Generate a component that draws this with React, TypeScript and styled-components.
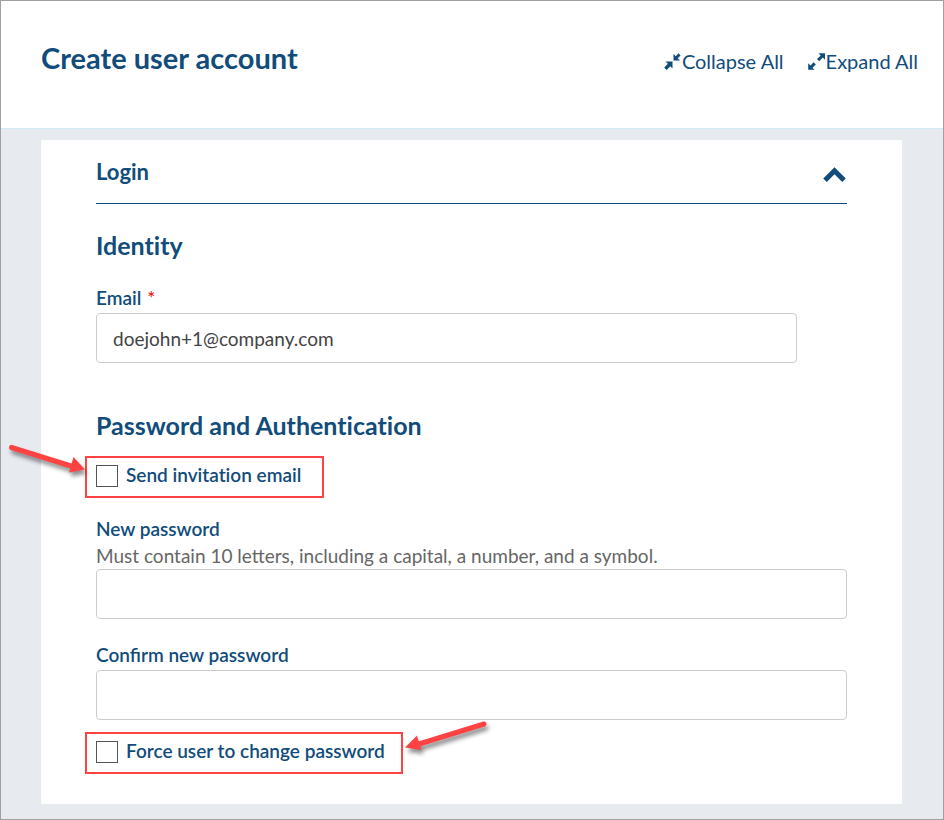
import React, { useId, useState } from "react";
import styled, { createGlobalStyle } from "styled-components";

const navy = "#114c7b";
const red = "#ff4343";

const GlobalStyle = createGlobalStyle`
  *, *::before, *::after { box-sizing: border-box; }
  body { margin: 0; font-family: Lato, "Open Sans", sans-serif; color: ${navy}; }
  button, input { font: inherit; color: inherit; }
`;

const Page = styled.div`
  display: flex;
  flex-direction: column;
  min-height: 100vh;
  border: 1px solid #a0a0a0;
  background: #e7eaef;
`;

const Header = styled.header`
  display: flex;
  align-items: flex-start;
  justify-content: space-between;
  gap: 24px;
  padding: 39px 25px 52px 40px;
  background: #fff;
  border-bottom: 1px solid #d0ebf5;
`;

const Title = styled.h1`
  margin: 0;
  font-size: 29px;
  line-height: 36px;
  font-weight: 700;
`;

const Actions = styled.div`
  display: flex;
  gap: 24px;
  padding-top: 7px;
`;

const ActionButton = styled.button`
  display: flex;
  align-items: center;
  gap: 1px;
  padding: 0;
  border: 0;
  background: none;
  font-size: 20px;
  line-height: 28px;
  white-space: nowrap;
  cursor: pointer;
`;

const Card = styled.main`
  margin: 11px 41px 15px 40px;
  padding: 0 55px 30px;
  background: #fff;
`;

const SectionToggle = styled.button`
  display: flex;
  align-items: center;
  justify-content: space-between;
  width: 100%;
  height: 64px;
  padding: 0;
  border: 0;
  border-bottom: 1px solid ${navy};
  background: none;
  font-size: 22px;
  font-weight: 700;
  text-align: left;
  cursor: pointer;
`;

const ChevronBox = styled.span<{ $open: boolean }>`
  display: flex;
  padding-top: 6px;
  transform: ${(p) => (p.$open ? "none" : "rotate(180deg)")};
`;

const GroupTitle = styled.h2<{ $first?: boolean }>`
  margin: ${(p) => (p.$first ? "25px 0 25px" : "46px 0 15px")};
  font-size: 25px;
  line-height: 32px;
  font-weight: 700;
  font-variant-ligatures: none;
`;

const Field = styled.div<{ $inset?: boolean; $space?: number }>`
  display: flex;
  flex-direction: column;
  margin-top: ${(p) => p.$space ?? 0}px;
  padding-right: ${(p) => (p.$inset ? "50px" : "0")};
`;

const Label = styled.label`
  margin-bottom: 3px;
  font-size: 19px;
  line-height: 24px;
  font-weight: 600;
`;

const CheckLabel = styled(Label)`
  font-variant-ligatures: none;
`;

const Required = styled.span`
  margin-left: 6px;
  color: #f00;
  font-weight: 400;
`;

const Help = styled.span`
  padding-bottom: 1px;
  font-size: 19px;
  line-height: 24px;
  color: #666;
`;

const TextInput = styled.input`
  width: 100%;
  height: 50px;
  padding: 0 16px;
  border: 1px solid #ccc;
  border-radius: 4px;
  background: #fff;
  color: #444;
  font-size: 19px;
`;

const Callout = styled.div<{ $room: number; $space?: number }>`
  position: relative;
  display: flex;
  align-items: flex-start;
  gap: 8px;
  width: fit-content;
  height: 42px;
  margin-top: ${(p) => p.$space ?? 0}px;
  margin-left: -11px;
  padding: 5px ${(p) => p.$room}px 0 9px;
  border: 2px solid ${red};
`;

const CheckBox = styled.input`
  appearance: none;
  width: 22px;
  height: 22px;
  margin: 2px 0 0;
  border: 1px solid #555;
  background: #fff;
  &:checked { background: ${navy}; box-shadow: inset 0 0 0 4px #fff; }
`;

const Arrow = styled.svg<{ $side: "left" | "right" }>`
  position: absolute;
  top: -18px;
  ${(p) => (p.$side === "left" ? "right" : "left")}: calc(100% + 2px);
  overflow: visible;
  filter: drop-shadow(2px 4px 2px rgba(0, 0, 0, 0.45));
  pointer-events: none;
`;

const CollapseIcon = () => (
  <svg width="17" height="17" viewBox="0 0 17 17" fill={navy} aria-hidden="true">
    <path d="M1.5 8.5H8.5V15.5L6.3 13.3L2.6 17L.2 14.6L3.9 10.8Z" />
    <path d="M9.5 .8L11.7 3.2L14.6 .3L16.6 2.4L13.7 5.3L16 7.5H9.5Z" />
  </svg>
);

const ExpandIcon = () => (
  <svg width="17" height="17" viewBox="0 0 17 17" fill={navy} aria-hidden="true">
    <path d="M10.5 .3H17V6.7L14.8 4.6L11.2 8.2L9 6L12.7 2.4Z" />
    <path d="M.2 10.3L2.5 12.6L5.7 9.3L7.8 11.4L4.5 14.7L6.6 16.8H.2Z" />
  </svg>
);

const ChevronIcon = () => (
  <svg width="24" height="16" viewBox="0 0 24 16" fill="none" aria-hidden="true">
    <path d="M2 13.2L11.5 3.8L21 13.2" stroke={navy} strokeWidth="5" />
  </svg>
);

function App() {
  const id = useId();
  const [open, setOpen] = useState(true);
  return (
    <>
      <GlobalStyle />
      <Page>
        <Header>
          <Title>Create user account</Title>
          <Actions>
            <ActionButton type="button" onClick={() => setOpen(false)}>
              <CollapseIcon />
              Collapse All
            </ActionButton>
            <ActionButton type="button" onClick={() => setOpen(true)}>
              <ExpandIcon />
              Expand All
            </ActionButton>
          </Actions>
        </Header>
        <Card>
          <SectionToggle type="button" aria-expanded={open} onClick={() => setOpen(!open)}>
            Login
            <ChevronBox $open={open}>
              <ChevronIcon />
            </ChevronBox>
          </SectionToggle>
          {open && (
            <form>
              <GroupTitle $first>Identity</GroupTitle>
              <Field $inset>
                <Label htmlFor={`${id}-email`}>
                  Email<Required>*</Required>
                </Label>
                <TextInput id={`${id}-email`} type="email" required defaultValue="doejohn+1@company.com" />
              </Field>

              <GroupTitle>Password and Authentication</GroupTitle>
              <Callout $room={21}>
                <CheckBox id={`${id}-invite`} type="checkbox" />
                <CheckLabel htmlFor={`${id}-invite`}>Send invitation email</CheckLabel>
                <Arrow $side="left" width="76" height="40" viewBox="0 0 76 40" aria-hidden="true">
                  <path d="M2.5 7.5L62 26" stroke={red} strokeWidth="5" strokeLinecap="round" />
                  <path d="M64.5 17L76 29.5L60 32.5Z" fill={red} />
                </Arrow>
              </Callout>
              <Field $space={19}>
                <Label htmlFor={`${id}-new`}>New password</Label>
                <Help id={`${id}-help`}>Must contain 10 letters, including a capital, a number, and a symbol.</Help>
                <TextInput id={`${id}-new`} type="password" aria-describedby={`${id}-help`} />
              </Field>
              <Field $space={24}>
                <Label htmlFor={`${id}-confirm`}>Confirm new password</Label>
                <TextInput id={`${id}-confirm`} type="password" />
              </Field>
              <Callout $room={16} $space={12}>
                <CheckBox id={`${id}-force`} type="checkbox" />
                <CheckLabel htmlFor={`${id}-force`}>Force user to change password</CheckLabel>
                <Arrow $side="right" width="84" height="40" viewBox="0 0 84 40" aria-hidden="true">
                  <path d="M81 8L16 28" stroke={red} strokeWidth="5" strokeLinecap="round" />
                  <path d="M14 19.5L2 31.5L18.5 34Z" fill={red} />
                </Arrow>
              </Callout>
            </form>
          )}
        </Card>
      </Page>
    </>
  );
}

export default App;
